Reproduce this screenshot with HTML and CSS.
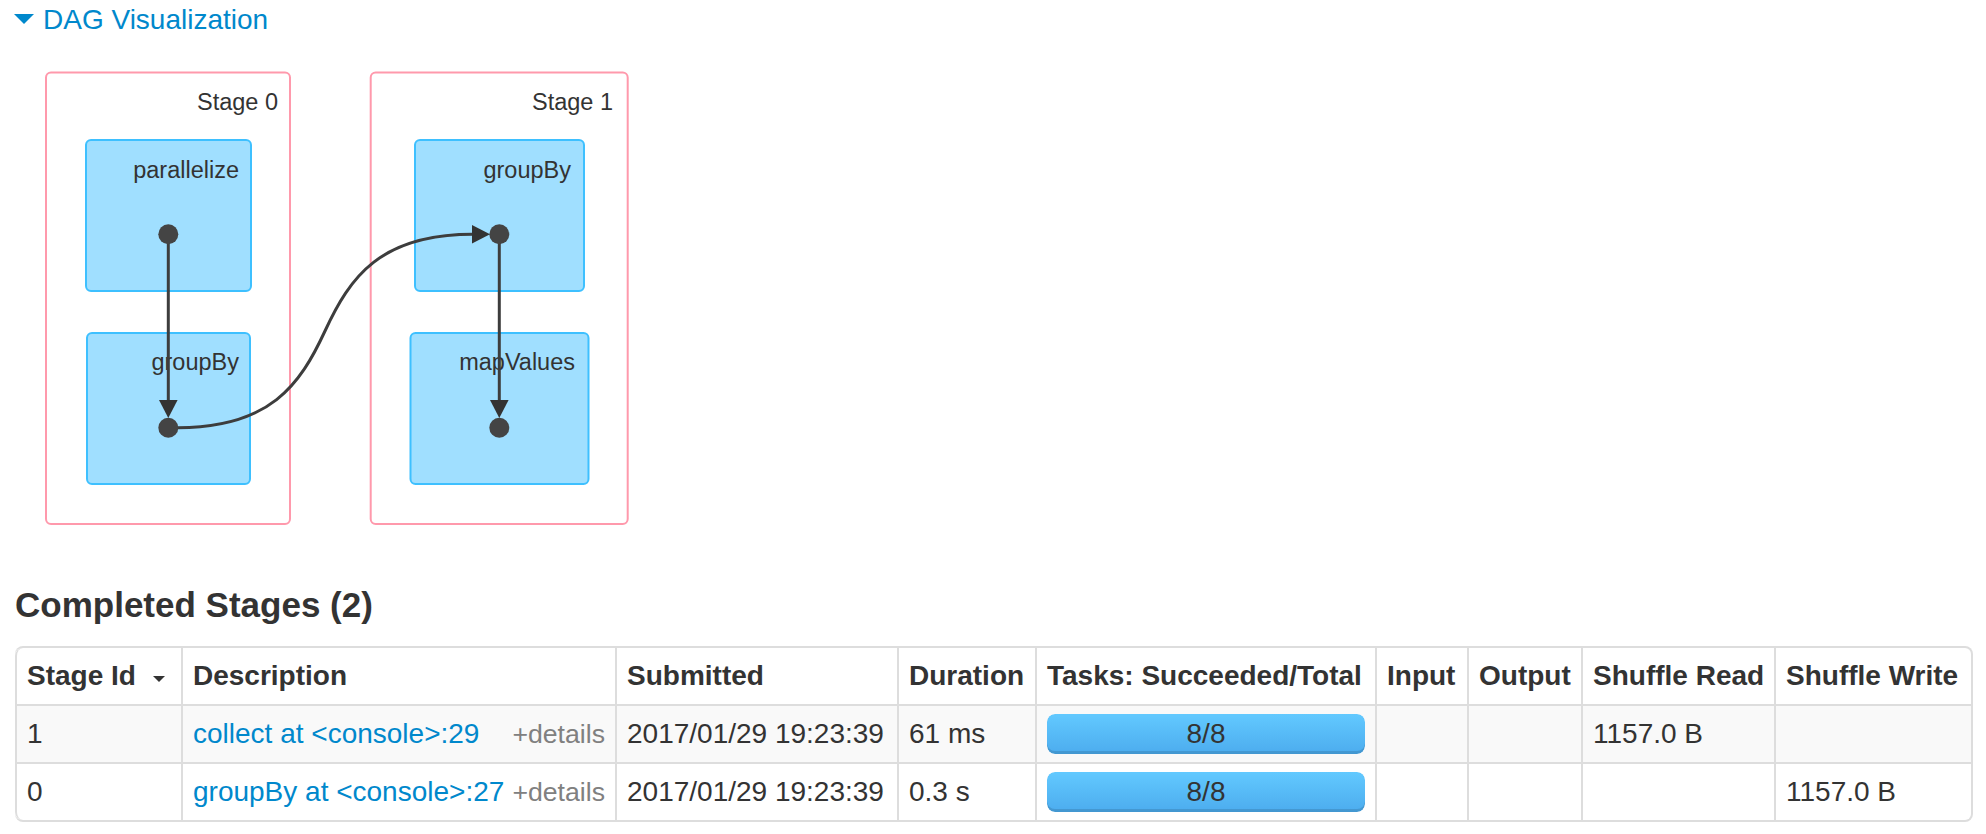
FILE: index.html
```html
<!DOCTYPE html>
<html>
<head>
<meta charset="utf-8">
<title>Spark Jobs</title>
<link rel="stylesheet" href="styles.css">
</head>
<body>
<div class="container">
  <div class="dag-toggle">
    <span class="arrow-open"></span>
    <a class="dag-link" href="#">DAG Visualization</a>
  </div>
  <svg class="dag" width="660" height="525" viewBox="15 40 660 525" xmlns="http://www.w3.org/2000/svg">
    <g class="stage">
      <rect x="46" y="72.5" width="244" height="451.5" rx="5" ry="5"></rect>
      <text x="278" y="110">Stage 0</text>
    </g>
    <g class="stage">
      <rect x="370.7" y="72.5" width="257" height="451.5" rx="5" ry="5"></rect>
      <text x="613" y="110">Stage 1</text>
    </g>
    <g class="op">
      <rect x="86" y="140" width="165" height="151" rx="5" ry="5"></rect>
      <text x="239" y="178">parallelize</text>
    </g>
    <g class="op">
      <rect x="87" y="333" width="163" height="151" rx="5" ry="5"></rect>
      <text x="239" y="370">groupBy</text>
    </g>
    <g class="op">
      <rect x="415" y="140" width="169" height="151" rx="5" ry="5"></rect>
      <text x="571" y="178">groupBy</text>
    </g>
    <g class="op">
      <rect x="410.5" y="333" width="178" height="151" rx="5" ry="5"></rect>
      <text x="575" y="370">mapValues</text>
    </g>
    <g class="edges">
      <path d="M168.3,234.3 L168.3,401"></path>
      <path d="M499.3,234.3 L499.3,401"></path>
      <path d="M168.3,427.7 L178,427.7 C270,427.7 300,385 325,331 C350,277 380,234.3 473,234.3"></path>
    </g>
    <g class="arrows">
      <polygon points="159,400 177.6,400 168.3,418"></polygon>
      <polygon points="490,400 508.6,400 499.3,418"></polygon>
      <polygon points="472,225 472,243.6 490,234.3"></polygon>
    </g>
    <g class="dots">
      <circle cx="168.3" cy="234.3" r="10"></circle>
      <circle cx="168.3" cy="427.7" r="10"></circle>
      <circle cx="499.3" cy="234.3" r="10"></circle>
      <circle cx="499.3" cy="427.7" r="10"></circle>
    </g>
  </svg>

  <h4 class="section-title">Completed Stages (2)</h4>
  <table class="stages">
    <thead>
      <tr>
        <th class="c-id">Stage Id<span class="sort-arrow"></span></th>
        <th class="c-desc">Description</th>
        <th class="c-sub">Submitted</th>
        <th class="c-dur">Duration</th>
        <th class="c-tasks">Tasks: Succeeded/Total</th>
        <th class="c-in">Input</th>
        <th class="c-out">Output</th>
        <th class="c-sr">Shuffle Read</th>
        <th class="c-sw">Shuffle Write</th>
      </tr>
    </thead>
    <tbody>
      <tr class="odd">
        <td>1</td>
        <td><span class="details">+details</span><a class="desc-link" href="#">collect at &lt;console&gt;:29</a></td>
        <td>2017/01/29 19:23:39</td>
        <td>61 ms</td>
        <td><div class="progress"><div class="bar">8/8</div></div></td>
        <td></td>
        <td></td>
        <td>1157.0 B</td>
        <td></td>
      </tr>
      <tr>
        <td>0</td>
        <td><span class="details">+details</span><a class="desc-link" href="#">groupBy at &lt;console&gt;:27</a></td>
        <td>2017/01/29 19:23:39</td>
        <td>0.3 s</td>
        <td><div class="progress"><div class="bar">8/8</div></div></td>
        <td></td>
        <td></td>
        <td></td>
        <td>1157.0 B</td>
      </tr>
    </tbody>
  </table>
</div>
</body>
</html>
```

FILE: styles.css
```css
html, body {
  margin: 0;
  padding: 0;
  background: #ffffff;
}

body {
  font-family: "Liberation Sans", Arial, Helvetica, sans-serif;
  font-size: 28px;
  line-height: 40px;
  color: #333333;
}

.container {
  padding: 0 13px 0 15px;
}

.dag-toggle {
  display: flex;
  align-items: center;
  gap: 9px;
  height: 40px;
}

.arrow-open {
  width: 0;
  height: 0;
  border-left: 10px solid transparent;
  border-right: 10px solid transparent;
  border-top: 10px solid #0088cc;
  margin-top: -2px;
  margin-left: -1px;
}

.dag-link {
  color: #0088cc;
  text-decoration: none;
}

.dag {
  display: block;
}

.dag text {
  font-family: "Liberation Sans", Arial, Helvetica, sans-serif;
  font-size: 23.5px;
  fill: #333333;
  text-anchor: end;
}

.stage rect {
  fill: #ffffff;
  stroke: #ff99ac;
  stroke-width: 2;
}

.op rect {
  fill: #a0dfff;
  stroke: #3ec0ff;
  stroke-width: 2;
}

.edges path {
  fill: none;
  stroke: #3d3d3d;
  stroke-width: 3;
}

.arrows polygon {
  fill: #333333;
}

.dots circle {
  fill: #444444;
}

.section-title {
  margin: 20px 0 21px 0;
  font-size: 35px;
  line-height: 40px;
  font-weight: bold;
  color: #333333;
}

.stages {
  width: 1958px;
  table-layout: fixed;
  border-collapse: separate;
  border-spacing: 0;
  border: 2px solid #dddddd;
  border-left: 0;
  border-radius: 8px;
}

.stages th,
.stages td {
  box-sizing: border-box;
  padding: 8px 10px;
  line-height: 40px;
  text-align: left;
  vertical-align: top;
  border-left: 2px solid #dddddd;
  white-space: nowrap;
  overflow: hidden;
}

.stages th {
  font-weight: bold;
}

.stages td {
  border-top: 2px solid #dddddd;
}

.stages thead th:first-child {
  border-top-left-radius: 8px;
}

.stages tbody tr:last-child td:first-child {
  border-bottom-left-radius: 8px;
}

.stages tr.odd td {
  background-color: #f9f9f9;
}

.c-id { width: 166px; }
.c-desc { width: 434px; }
.c-sub { width: 282px; }
.c-dur { width: 138px; }
.c-tasks { width: 340px; }
.c-in { width: 92px; }
.c-out { width: 114px; }
.c-sr { width: 193px; }
.c-sw { width: 197px; }

.sort-arrow {
  display: inline-block;
  width: 0;
  height: 0;
  border-left: 6px solid transparent;
  border-right: 6px solid transparent;
  border-top: 6px solid #333333;
  margin-left: 17px;
  vertical-align: 3px;
}

.desc-link {
  color: #0088cc;
  text-decoration: none;
}

.details {
  float: right;
  color: #808080;
  font-size: 26.67px;
}

.progress {
  height: 40px;
  border-radius: 8px;
  overflow: hidden;
  background: #f7f7f7;
}

.bar {
  height: 40px;
  width: 100%;
  border-radius: 8px;
  background-color: #56bdf8;
  background-image: linear-gradient(to bottom, #62c9ff, #4cacee);
  box-shadow: inset 0 -3px 0 rgba(0, 0, 0, 0.12);
  text-align: center;
  color: #333333;
  line-height: 40px;
}
```
